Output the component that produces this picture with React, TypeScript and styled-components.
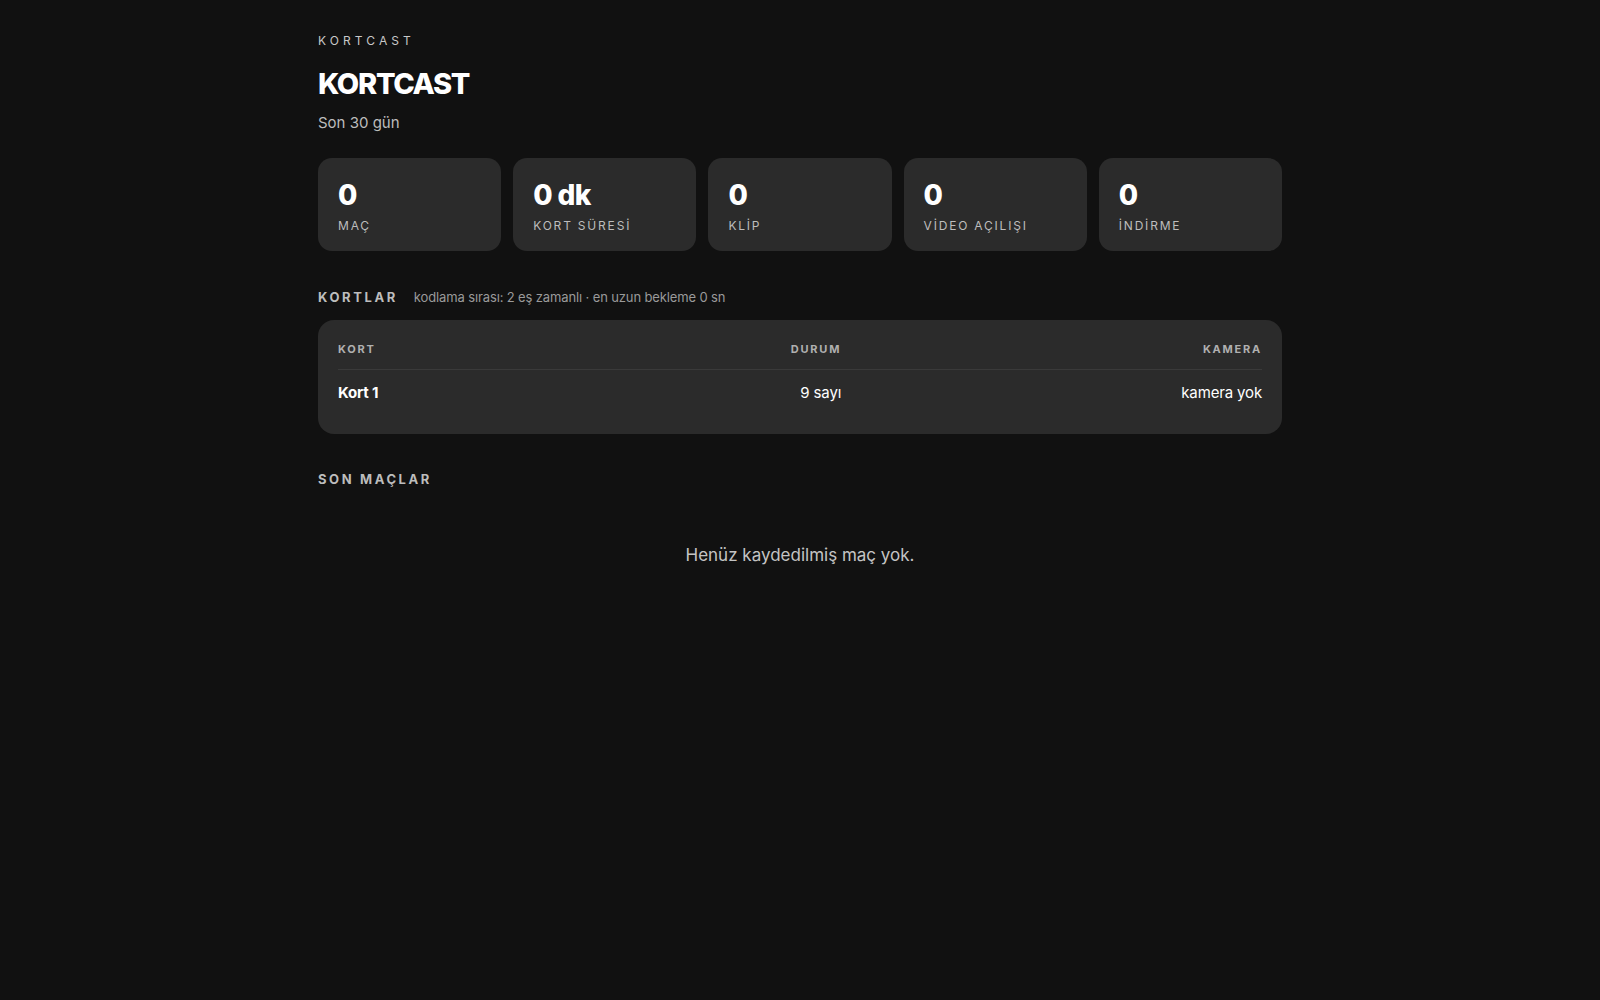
import styled, { createGlobalStyle } from 'styled-components'

interface IStat {
    value: string
    label: string
}

interface ICourt {
    name: string
    status: string
    camera: string
}

const stats: IStat[] = [
    { value: '0', label: 'Maç' },
    { value: '0 dk', label: 'Kort süresi' },
    { value: '0', label: 'Klip' },
    { value: '0', label: 'Video açılışı' },
    { value: '0', label: 'İndirme' },
]

const courts: ICourt[] = [
    { name: 'Kort 1', status: '9 sayı', camera: 'kamera yok' },
]

const GlobalStyle = createGlobalStyle`
    html, body {
        margin: 0;
        padding: 0;
        background: #111111;
        color: #ffffff;
        font-family: Inter, "Noto Sans", "Liberation Sans", sans-serif;
    }
`

const App: React.FC = () => {
    return (
        <>
            <GlobalStyle />
            <Page>
                <Eyebrow>KORTCAST</Eyebrow>
                <Title>KORTCAST</Title>
                <Subtitle>Son 30 gün</Subtitle>

                <StatGrid>
                    {stats.map(({ value, label }) => (
                        <StatCard key={label}>
                            <StatValue>{value}</StatValue>
                            <StatLabel>{label.toLocaleUpperCase('tr-TR')}</StatLabel>
                        </StatCard>
                    ))}
                </StatGrid>

                <SectionHead>
                    <SectionTitle>Kortlar</SectionTitle>
                    <SectionNote>kodlama sırası: 2 eş zamanlı · en uzun bekleme 0 sn</SectionNote>
                </SectionHead>

                <TableCard>
                    <Row header>
                        <HeadCell>Kort</HeadCell>
                        <HeadCell right>Durum</HeadCell>
                        <HeadCell right>Kamera</HeadCell>
                    </Row>
                    {courts.map(({ name, status, camera }) => (
                        <Row key={name}>
                            <Cell strong>{name}</Cell>
                            <Cell right>{status}</Cell>
                            <Cell right>{camera}</Cell>
                        </Row>
                    ))}
                </TableCard>

                <SectionHead>
                    <SectionTitle>Son maçlar</SectionTitle>
                </SectionHead>

                <Empty>Henüz kaydedilmiş maç yok.</Empty>
            </Page>
        </>
    )
}

const Page = styled.main`
    width: 964px;
    margin: 0 auto;
    padding: 33px 0 60px;
`

const Eyebrow = styled.div`
    font-size: 12px;
    letter-spacing: 0.34em;
    color: #c8c8c8;
    line-height: 16px;
`

const Title = styled.h1`
    margin: 17px 0 0;
    font-size: 29px;
    line-height: 36px;
    font-weight: 800;
    letter-spacing: -0.045em;
    color: #ffffff;
`

const Subtitle = styled.div`
    margin-top: 11px;
    font-size: 15px;
    line-height: 20px;
    color: #bdbdbd;
`

const StatGrid = styled.div`
    display: grid;
    grid-template-columns: repeat(5, 1fr);
    gap: 12px;
    margin-top: 25px;
`

const StatCard = styled.div`
    height: 93px;
    box-sizing: border-box;
    padding: 22px 20px 0;
    background: #2b2b2b;
    border-radius: 14px;
`

const StatValue = styled.div`
    font-size: 28px;
    line-height: 30px;
    font-weight: 800;
    letter-spacing: -0.02em;
`

const StatLabel = styled.div`
    margin-top: 8px;
    font-size: 12px;
    line-height: 16px;
    letter-spacing: 0.15em;
    color: #bdbdbd;
`

const SectionHead = styled.div`
    display: flex;
    align-items: baseline;
    gap: 16px;
    margin: 37px 0 14px;
`

const SectionTitle = styled.h2`
    margin: 0;
    font-size: 13px;
    line-height: 18px;
    font-weight: 700;
    letter-spacing: 0.2em;
    text-transform: uppercase;
    color: #bdbdbd;
`

const SectionNote = styled.span`
    font-size: 13px;
    letter-spacing: -0.01em;
    color: #9a9a9a;
`

const TableCard = styled.div`
    background: #2b2b2b;
    border-radius: 16px;
    padding: 21px 20px 31px;
    margin-bottom: -1px;
`

const Row = styled.div<{ header?: boolean }>`
    display: grid;
    grid-template-columns: 400fr 101fr 419fr;
    align-items: center;
    ${({ header }) => header
        ? 'padding-bottom: 12px; border-bottom: 1px solid #3a3a3a;'
        : 'padding-top: 13px;'}
`

const HeadCell = styled.div<{ right?: boolean }>`
    font-size: 11px;
    line-height: 16px;
    font-weight: 700;
    letter-spacing: 0.16em;
    text-transform: uppercase;
    color: #b0b0b0;
    text-align: ${({ right }) => right ? 'right' : 'left'};
`

const Cell = styled.div<{ right?: boolean; strong?: boolean }>`
    font-size: 15px;
    line-height: 20px;
    font-weight: ${({ strong }) => strong ? 700 : 400};
    letter-spacing: -0.01em;
    color: #ffffff;
    text-align: ${({ right }) => right ? 'right' : 'left'};
    white-space: nowrap;
`

const Empty = styled.p`
    margin: 55px 0 0;
    text-align: center;
    font-size: 17px;
    line-height: 24px;
    color: #c4c4c4;
`

export default App
